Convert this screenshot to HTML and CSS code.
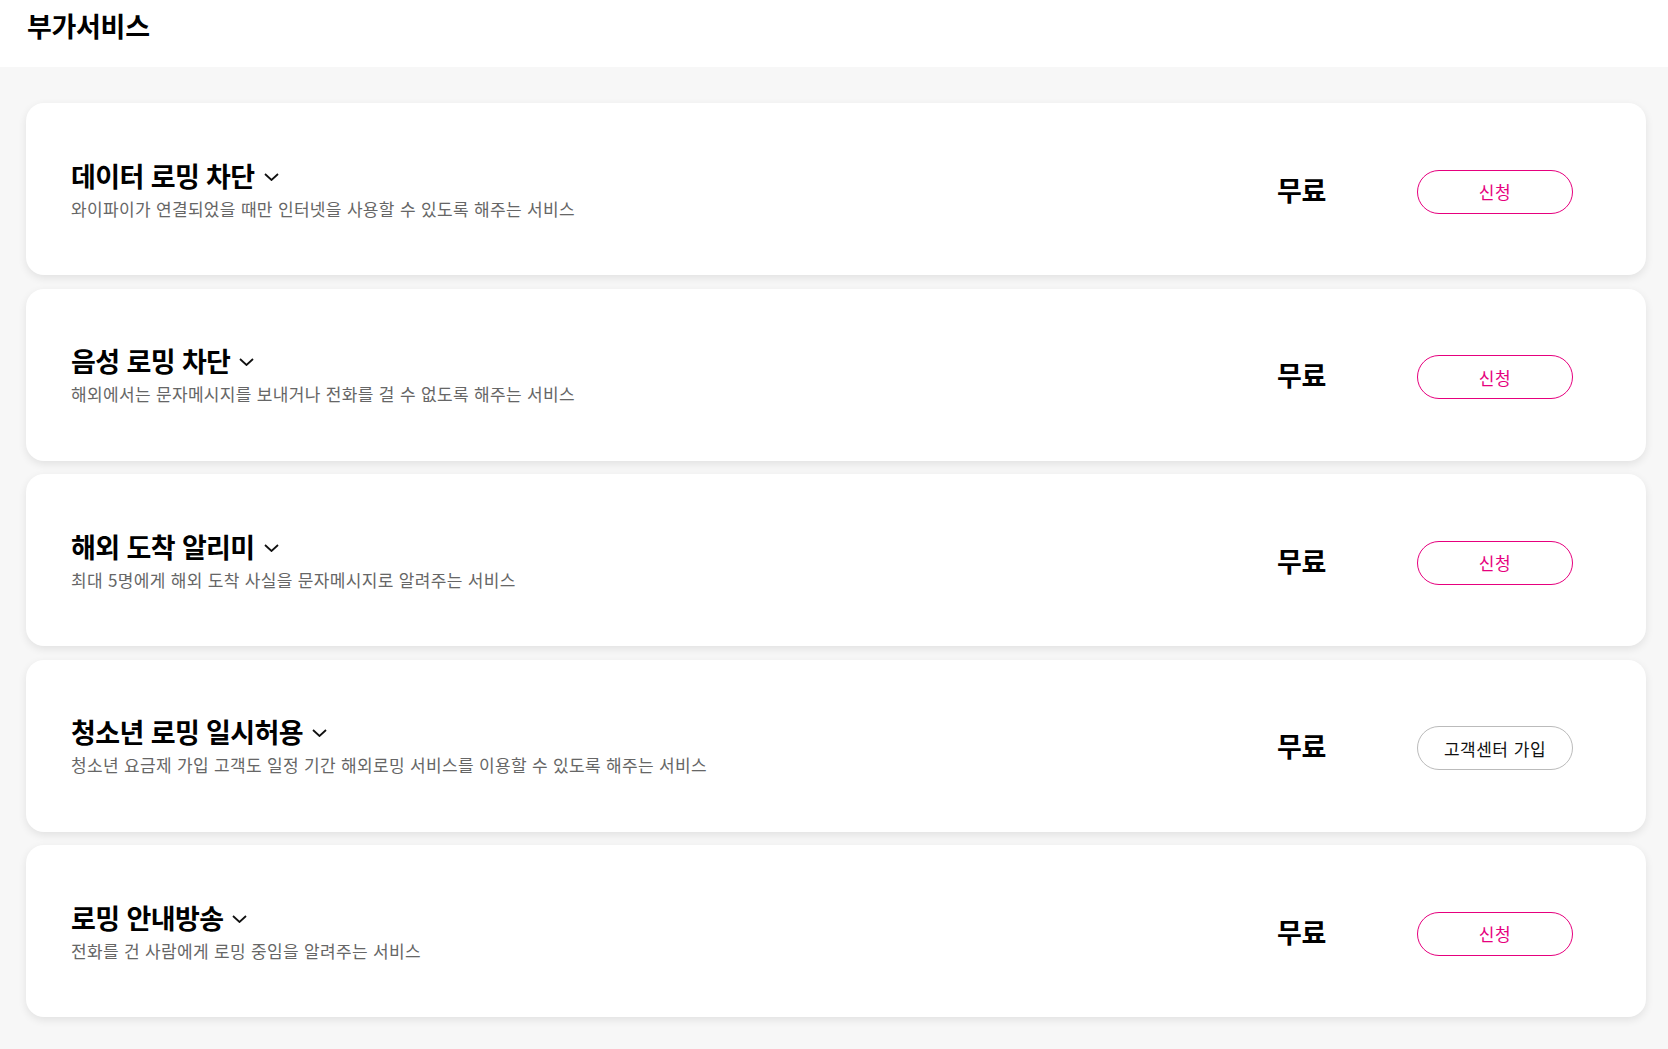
FILE: index.html
```html
<!DOCTYPE html>
<html lang="ko">
<head>
    <meta charset="UTF-8" />
    <meta name="viewport" content="width=device-width, initial-scale=1" />
    <title>부가서비스</title>
    <link rel="stylesheet" href="styles.css">
</head>
<body>
    <header class="page-header">
        <h1>부가서비스</h1>
    </header>

    <main class="service-list">
        <div class="service-card">
            <div class="service-info">
                <h2 class="service-name">데이터 로밍 차단
                    <svg class="chevron" viewBox="0 0 15 8" aria-hidden="true"><polyline points="1,1 7.5,7 14,1" /></svg>
                </h2>
                <p class="service-desc">와이파이가 연결되었을 때만 인터넷을 사용할 수 있도록 해주는 서비스</p>
            </div>
            <div class="service-price">무료</div>
            <button class="btn btn-apply">신청</button>
        </div>

        <div class="service-card">
            <div class="service-info">
                <h2 class="service-name">음성 로밍 차단
                    <svg class="chevron" viewBox="0 0 15 8" aria-hidden="true"><polyline points="1,1 7.5,7 14,1" /></svg>
                </h2>
                <p class="service-desc">해외에서는 문자메시지를 보내거나 전화를 걸 수 없도록 해주는 서비스</p>
            </div>
            <div class="service-price">무료</div>
            <button class="btn btn-apply">신청</button>
        </div>

        <div class="service-card">
            <div class="service-info">
                <h2 class="service-name">해외 도착 알리미
                    <svg class="chevron" viewBox="0 0 15 8" aria-hidden="true"><polyline points="1,1 7.5,7 14,1" /></svg>
                </h2>
                <p class="service-desc">최대 5명에게 해외 도착 사실을 문자메시지로 알려주는 서비스</p>
            </div>
            <div class="service-price">무료</div>
            <button class="btn btn-apply">신청</button>
        </div>

        <div class="service-card">
            <div class="service-info">
                <h2 class="service-name">청소년 로밍 일시허용
                    <svg class="chevron" viewBox="0 0 15 8" aria-hidden="true"><polyline points="1,1 7.5,7 14,1" /></svg>
                </h2>
                <p class="service-desc">청소년 요금제 가입 고객도 일정 기간 해외로밍 서비스를 이용할 수 있도록 해주는 서비스</p>
            </div>
            <div class="service-price">무료</div>
            <button class="btn btn-center">고객센터 가입</button>
        </div>

        <div class="service-card">
            <div class="service-info">
                <h2 class="service-name">로밍 안내방송
                    <svg class="chevron" viewBox="0 0 15 8" aria-hidden="true"><polyline points="1,1 7.5,7 14,1" /></svg>
                </h2>
                <p class="service-desc">전화를 건 사람에게 로밍 중임을 알려주는 서비스</p>
            </div>
            <div class="service-price">무료</div>
            <button class="btn btn-apply">신청</button>
        </div>
    </main>
</body>
</html>
```

FILE: styles.css
```css
body {
    font-family: "Noto Sans CJK KR", "Noto Sans", sans-serif;
    background: #f7f7f7;
    margin: 0;
    padding: 0;
    color: #000;
    min-height: 100vh;
}
.page-header {
    background: #fff;
    height: 67px;
    padding: 0 27px;
    display: flex;
    align-items: center;
}
.page-header h1 {
    margin: 0 0 17px;
    font-size: 27px;
    font-weight: 700;
    letter-spacing: -0.3px;
    line-height: 1;
}
.service-list {
    display: flex;
    flex-direction: column;
    gap: 13.5px;
    padding: 36px 22px 20px 26px;
}
.service-card {
    display: flex;
    align-items: center;
    height: 172px;
    box-sizing: border-box;
    padding: 0 73px 0 45px;
    background: #fff;
    border-radius: 18px;
    box-shadow: 0 3px 8px rgba(0, 0, 0, 0.09);
}
.service-info {
    flex: 1;
}
.service-name {
    margin: 0;
    font-size: 27px;
    font-weight: 700;
    letter-spacing: -0.6px;
    line-height: 36px;
    display: flex;
    align-items: center;
}
.chevron {
    width: 15px;
    height: 8px;
    margin-left: 9px;
    margin-top: 2px;
    fill: none;
    stroke: #111;
    stroke-width: 1.8;
}
.service-desc {
    margin: 3px 0 0;
    font-size: 17px;
    line-height: 24px;
    color: #666;
    letter-spacing: 0.33px;
}
.service-price {
    font-size: 27px;
    font-weight: 700;
    letter-spacing: -0.3px;
    margin-right: 91px;
}
.btn {
    width: 156px;
    height: 44px;
    margin-top: 5px;
    border-radius: 22px;
    background: #fff;
    font-family: inherit;
    font-size: 17px;
    letter-spacing: 0.5px;
    cursor: pointer;
    padding: 0;
}
.btn-apply {
    border: 1px solid #e6007e;
    color: #e6007e;
}
.btn-center {
    border: 1px solid #bbb;
    color: #111;
}
```
